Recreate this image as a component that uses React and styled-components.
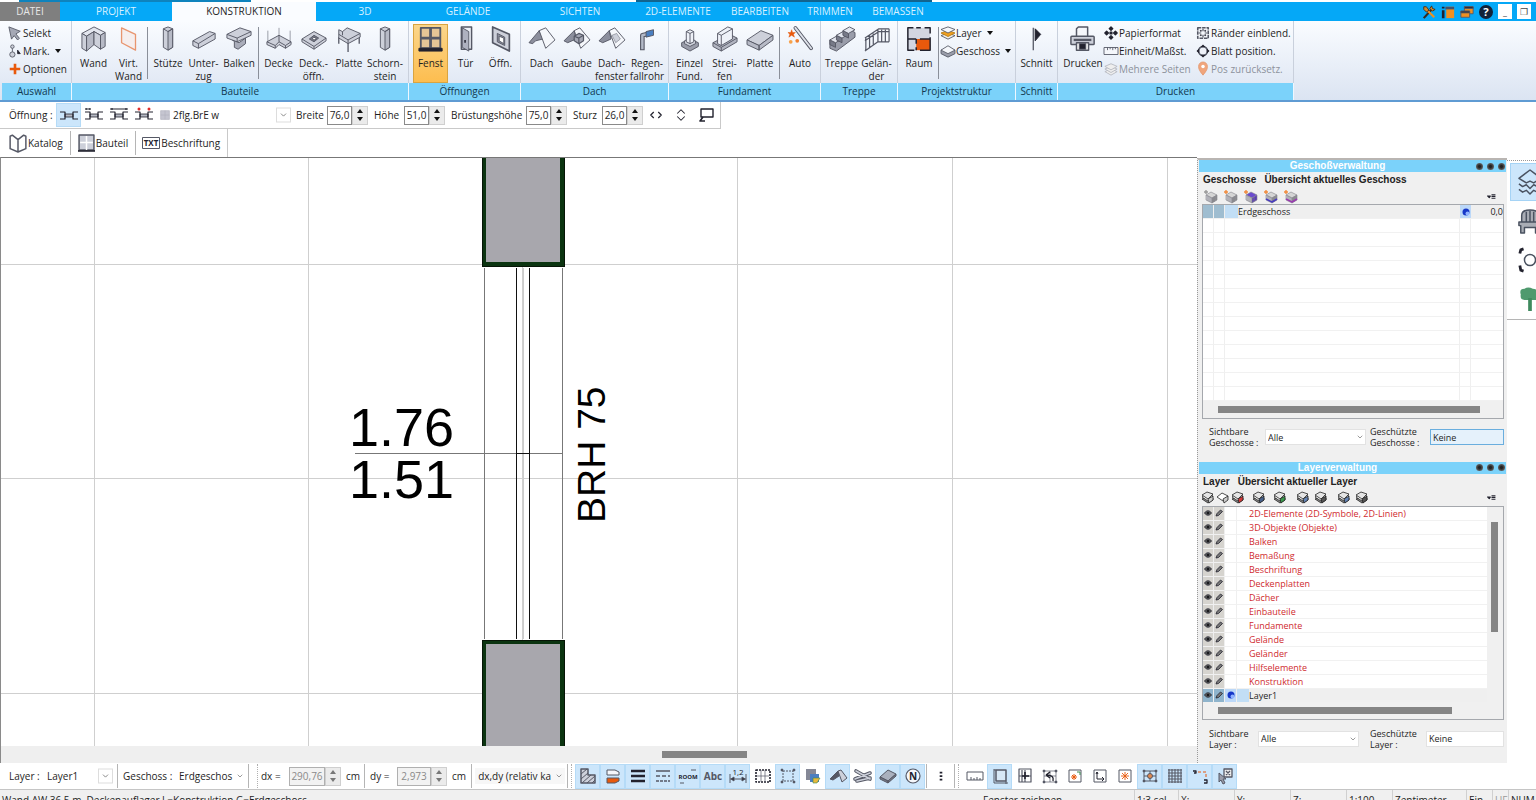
import React from "react"
import styled, { createGlobalStyle } from "styled-components"
import { ChevronDown } from "lucide-react"

const GlobalStyle = createGlobalStyle`
  * {
    box-sizing: border-box;
  }
  body {
    margin: 0;
    overflow: hidden;
    font: 10px/14px "Open Sans", "Noto Sans", sans-serif;
    color: #1e1e1e;
    background: #fff;
  }
  button, input, select {
    font: inherit;
    color: inherit;
    margin: 0;
    padding: 0;
    border: 0;
    border-radius: 0;
    background: none;
  }
`

const Page = styled.div`
  display: flex;
  flex-direction: column;
  height: 100vh;
  overflow: hidden;
`

/* ---------- icons ---------- */

const S = "#555865"
const F = "#cdd0da"
const D = "#22222e"
const O = "#e8590c"

const Svg = styled.svg`
  display: block;
  flex: none;
  overflow: visible;
  stroke-linejoin: round;
`

const column = (
  <>
    <path d="M9 3l5-2 5 2v20l-5 3-5-3z" />
    <path d="M14 6l5-3v20l-5 3z" fill="#b7bac6" />
    <path d="M9 3l5 3 5-3" fill="none" />
  </>
)

// 28 x 28 ribbon drawings
const big = {
  wand: (
    <>
      <path d="M1 8 14 1l12 6-5 3-7-4-8 5z" fill="#e3e6ee" />
      <path d="M1 8l5 3v16l-5-3z" />
      <path d="M6 11l8-5v14l-8 7z" fill="#b7bac6" />
      <path d="M14 6l7 4v15l-7-5z" />
      <path d="M21 10l5-3v15l-5 3z" fill="#b7bac6" />
    </>
  ),
  virt: <path d="M6 2l15 7v17L6 18z" fill="#f5eeee" stroke="#e8956f" strokeWidth="1.4" />,
  stuetze: column,
  schornstein: column,
  unterzug: (
    <>
      <path d="M2 16 20 6l6 2v6L8 24l-6-3z" />
      <path d="M2 16l6 3 18-11M8 19v5" fill="none" />
    </>
  ),
  balken: (
    <>
      <path d="M7 15l7 3 7-5v6l-8 6-4-2v-6z" fill="#aaadba" />
      <path d="M1 9 15 2l12 4v4L12 17 1 13z" />
      <path d="M1 9l11 4 15-7M12 13v4" fill="none" />
    </>
  ),
  decke: (
    <>
      <path d="M14 2v13M2 5v12M26 5v12" fill="none" strokeWidth="0.6" />
      <path d="M1 17l13-7 13 7v3l-6 4-7-4-4 4-9-4z" />
      <path d="M1 17l9 4 4-4 7 4 6-4M14 10v7M10 21v3M21 21v3" fill="none" />
    </>
  ),
  deckoeffn: (
    <>
      <path d="M1 14 14 6l13 7v3l-13 9L1 17z" />
      <path d="M1 14l13 8 13-9M14 22v3" fill="none" />
      <path d="M9 14l5-4 5 3-5 4z" fill="#777a88" />
      <path d="M12 14l2-2 3 2-3 1z" fill="#fff" />
    </>
  ),
  platte: (
    <>
      <path d="M3 12v7M25 10v9M13 18v10" fill="none" strokeWidth="1.4" />
      <path d="M3 4l4 2 5-4 14 6v4L13 19 3 13z" />
      <path d="M3 9l10 6 13-7M13 15v4M7 6v4" fill="none" />
    </>
  ),
  fenst: (
    <>
      <path d="M3 2h21v22H3z" fill="#e5c596" stroke={S} strokeWidth="2" />
      <path d="M13.500 2v22M3 13h21" stroke={S} strokeWidth="3" />
      <path d="M1 24h25v3H1z" fill={D} stroke={D} />
    </>
  ),
  tuer: (
    <>
      <path d="M9 1h11v24H9z" fill="#eef1f8" strokeWidth="1.6" />
      <path d="M10 2l7 4v21l-7-4z" fill="#aeb1bf" />
      <path d="M13 15v3" stroke={D} strokeWidth="1.6" />
    </>
  ),
  oeffn: (
    <>
      <path d="M5 1l18 8v18L5 18z" strokeWidth="1.8" />
      <path d="M10 8l8 4v9l-8-4z" fill="#8c8f9d" />
      <path d="M12 11l5 2v6l-5-3z" fill="#fff" />
    </>
  ),
  dach: (
    <>
      <path d="M11 5 0 18l4 1 3-3 8-2z" fill="#8c8f9d" />
      <path d="M11 5l7-3 10 13-10 9z" fill="#f5f7fb" />
    </>
  ),
  gaube: (
    <>
      <path d="M11 5 0 16l4 2 9-4z" fill="#8c8f9d" />
      <path d="M11 5l6-3 11 13-10 9z" fill="#f5f7fb" />
      <path d="M11 11l5-3 5 2v6l-5 3-5-3z" fill="#a5a8b5" strokeWidth="1.3" />
      <path d="M11 11l5 2 5-3M16 13v6" fill="none" strokeWidth="1.3" />
    </>
  ),
  dachfenster: (
    <>
      <path d="M11 5 0 16l4 2 9-4z" fill="#8c8f9d" />
      <path d="M11 5l6-3 11 13-10 9z" fill="#f5f7fb" />
      <path d="M14 10l5-2 4 6-5 4z" fill={F} strokeWidth="0.5" />
    </>
  ),
  regen: (
    <>
      <path d="M17 8l-8 2v16" fill="none" strokeWidth="5" />
      <path d="M17 8l-8 2v15" fill="none" stroke="#b4bac8" strokeWidth="2.6" />
      <path d="M13 6l8-2v6l-8 2z" fill="#4a7fc0" />
    </>
  ),
  einzel: (
    <>
      <path d="M5 18l9-4 9 4v4l-9 5-9-5z" fill="#9a9daa" />
      <path d="M8 16l6-3 6 3v3l-6 3-6-3z" />
      <path d="M10 6l4-2 4 2v11l-4 2-4-2z" fill="#eef1f8" />
      <path d="M10 6l4 2 4-2M14 8v11" fill="none" />
    </>
  ),
  streifen: (
    <>
      <path d="M1 18 19 9l8 4v4L10 27l-9-5z" fill="#b2b5c1" />
      <path d="M1 18l9 5 17-10M10 23v4" fill="none" />
      <path d="M6 8 17 1l5 2v11l-12 7-4-2z" fill="#eef1f8" />
      <path d="M6 8l4 2 12-7M10 10v11" fill="none" />
    </>
  ),
  slab: (
    <>
      <path d="M0 15 15 5l13 5-15 11z" />
      <path d="M0 15v5l13 6v-5zM13 21v5l15-11v-5z" fill="#b7bac6" />
    </>
  ),
  auto: (
    <>
      <path d="M9 2l17 22" stroke={S} strokeWidth="4" strokeLinecap="round" />
      <path d="M9 2l17 22" stroke="#dfe2ea" strokeWidth="2" strokeLinecap="round" />
      <path d="M5 4l1 3 3 0-2 2 1 3-3-2-3 2 1-3-2-2h3z" fill={O} stroke={O} strokeWidth="0.5" />
      <circle cx="4" cy="17" r="2" fill="#f7a24b" stroke="none" />
      <circle cx="11" cy="16" r="2" fill="#f08030" stroke="none" />
    </>
  ),
  treppe: (
    <>
      <path d="M1 15l6 3 5-3v-4l6-1 4-6 6 3v5L8 27l-7-3z" fill="#9a9daa" />
      {[0, 1, 2].map(i => (
        <g key={i} transform={`translate(${1 + i * 7} ${14 - i * 5})`}>
          <path d="M0 1v5l6 3V4z" fill="#777a88" />
          <path d="M0 1l7-4 6 3-7 4z" fill="#e3e6ee" />
        </g>
      ))}
    </>
  ),
  gelaender: (
    <path
      d="M1 13 16 3h11M1 16 16 6h11M1 27l14-10h12M2 13v13M6 10v13M10 8v13M15 4v13M19 4v13M23 4v13M27 3v14"
      fill="none"
      strokeWidth="1.3"
    />
  ),
  raum: (
    <>
      <path d="M2 2h24v24H2z" fill="#d3d6e0" stroke="none" />
      <path d="M11 14h15v12H11z" fill={O} stroke="none" />
      <path d="M8 2H2v24h7M26 8V2h-6M16 2h-5M26 12v14H15M2 14h9M15 14h11M11 14v5M11 23v3" fill="none" stroke={D} strokeWidth="1.6" />
    </>
  ),
  schnitt: (
    <>
      <path d="M10 2v24" stroke={S} strokeWidth="1.4" />
      <path d="M12 3l6 6-6 7z" fill={D} stroke={D} />
    </>
  ),
  drucken: (
    <>
      <path d="M7 11V3l2-2h10v10" fill="#f5f7fb" strokeWidth="1.6" />
      <rect x="1" y="11" width="25" height="9" rx="1" strokeWidth="1.6" />
      <path d="M4 15h19" strokeWidth="2.5" />
      <path d="M7 18h13v8H7z" fill="#fff" strokeWidth="1.6" />
      <path d="M10 19h7v6h-7z" fill={D} />
    </>
  ),
}

// 16 x 16 drawings
const small = {
  cursor: <path d="M1 1l13 5-5 3 4 5-2 2-4-5-3 4z" fill="#a5a8b5" />,
  mark: (
    <>
      <circle cx="5" cy="3" r="2" />
      <circle cx="5" cy="12" r="3" />
      <path d="M5 5v4" />
      <path d="M11 7l3 4h-3z" fill={D} stroke={D} />
    </>
  ),
  plus: <path d="M8 2v12M2 8h12" stroke={O} strokeWidth="3" />,
  layer: (
    <>
      <path d="M0 11l8-3 8 3-8 4z" fill="#eee" />
      <path d="M0 8l8-3 8 3-8 4z" fill="#f0a020" stroke="#b87a10" />
      <path d="M0 4l8-3 8 3-8 4z" fill="#f5f7fb" />
    </>
  ),
  geschoss: (
    <>
      <path d="M0 7v4l8 4 8-4V7z" fill="#9a9daa" />
      <path d="M0 7l8-5 8 5-8 4z" fill="#f5f7fb" />
    </>
  ),
  papier: (
    <path
      d="M8 1l2 2-2 2-2-2zM8 11l2 2-2 2-2-2zM3 6l2 2-2 2-2-2zM13 6l2 2-2 2-2-2zM7 7h2v2H7z"
      fill={D}
      stroke={D}
      strokeWidth="1.6"
    />
  ),
  lineal: <path d="M0 4h16v8H0zM4 4v3M7 4v2M10 4v3M13 4v2" fill="#f5f7fb" />,
  seiten: (
    <>
      <path d="M1 11l7-3 7 3-7 4z" fill="#eee" stroke="#b5b8c0" />
      <path d="M1 8l7-3 7 3-7 4z" fill="#eee" stroke="#b5b8c0" />
      <path d="M1 5l7-3 7 3-7 4z" fill="#eee" stroke="#b5b8c0" />
    </>
  ),
  raender: (
    <>
      <path d="M2 2h12v12H2z" fill="#f5f7fb" strokeWidth="1.8" strokeDasharray="4 1" />
      <path d="M8 3v3M8 10v3M3 8h3M10 8h3" strokeWidth="1.4" />
      <path d="M5 5h1v1H5zM10 5h1v1h-1zM5 10h1v1H5zM10 10h1v1h-1z" stroke={D} />
    </>
  ),
  blatt: (
    <>
      <circle cx="8" cy="8" r="5" fill="#eef1f8" strokeWidth="2" />
      <path d="M8 1l2 2H6zM8 15l2-2H6zM1 8l2-2v4zM15 8l-2-2v4z" fill={D} stroke={D} />
    </>
  ),
  pos: (
    <>
      <path d="M8 15C3 9 3 7 3 5a5 5 0 0 1 10 0c0 2 0 4-5 10z" fill="#f0a57c" stroke="#e39a72" />
      <circle cx="8" cy="5" r="2" fill="#fff" stroke="none" />
    </>
  ),
  tools: (
    <>
      <path d="M2 15 12 4" stroke="#3a2a1a" strokeWidth="2.5" />
      <path d="M14 14 6 6" stroke="#f09020" strokeWidth="2.5" />
      <path d="M2 2l3 0 3 4-3 2-3-3zM11 1l1 3 3 1-3 2-3-3z" fill="#d58a2a" stroke="#3a2a1a" />
    </>
  ),
  info: (
    <>
      <path d="M1 2h3v2H1zM1 6h3v9H1z" fill={D} stroke="none" />
      <path d="M6 2h9v13H6z" fill="#f09020" stroke="none" />
      <path d="M5 2h10v3H5z" fill="#44526b" stroke="none" />
    </>
  ),
  windows: (
    <>
      <path d="M5 2h10v8H5z" fill="#f09020" stroke={S} />
      <path d="M5 2h10v2H5z" fill={D} />
      <path d="M1 7h10v7H1z" fill="#f09020" stroke={S} />
      <path d="M1 7h10v2H1z" fill={D} />
    </>
  ),
  help: (
    <>
      <circle cx="8" cy="8" r="8" fill="#12223a" stroke="none" />
      <text x="8" y="13" textAnchor="middle" fontSize="13" fontWeight="700" fill="#fff" stroke="none">?</text>
    </>
  ),
  book: <path d="M8 5v11L1 13V2l2-1 5 4 5-4 2 1v11l-7 3" fill="#fff" strokeWidth="1.3" />,
  bauteil: (
    <>
      <path d="M1 0h14v14H1z" fill={F} strokeWidth="1.4" />
      <path d="M8 1v13M2 7h12" stroke="#fff" strokeWidth="1.4" />
      <path d="M0 15h16" stroke={D} strokeWidth="1.6" />
    </>
  ),
  fensterGrau: <path d="M1 1h14v14H1zM8 1v14M1 8h14" fill="#c5c5d0" stroke="#b0b0bd" />,
  breite: <path d="M5 4 1 8l4 4M11 4l4 4-4 4" fill="none" stroke={D} strokeWidth="1.6" />,
  hoehe: <path d="M3 6l5-5 5 5M3 10l5 5 5-5" fill="none" stroke={D} strokeWidth="1.4" />,
  monitor: (
    <>
      <path d="M3 2h12v8H3z" fill="#fff" stroke={D} strokeWidth="1.4" />
      <path d="M5 10l-3 4h5" fill="none" stroke={D} strokeWidth="1.6" />
    </>
  ),
  hatch: (
    <>
      <path d="M1 1h7v6h7v8H1z" strokeWidth="1.5" />
      <path d="M1 6l6-5M1 11l7-6M2 15l9-8M7 15l8-7M12 15l3-3" />
    </>
  ),
  halves: (
    <>
      <path d="M2 7V2h8l4 2v3z" fill="#f5f7fb" />
      <path d="M2 15v-5h12v3l-4 2z" fill={O} />
    </>
  ),
  thick: <path d="M1 3h14M1 8h14M1 13h14" stroke={D} strokeWidth="2.6" />,
  dashes: <path d="M1 3h14M1 8h4M7 8h4M13 8h2M1 13h3M5 13h3M9 13h3M13 13h2" strokeWidth="1.4" />,
  room: (
    <>
      <text x="8" y="11" textAnchor="middle" fontSize="6" fontWeight="700" fill={D} stroke="none">ROOM</text>
      <path d="M0 15h4M11 2h5" />
    </>
  ),
  abc: <text x="8" y="12" textAnchor="middle" fontSize="10" fontWeight="700" fill={S} stroke="none">Abc</text>,
  mass: (
    <>
      <text x="8" y="7" textAnchor="middle" fontSize="8" fill={D} stroke="none">1,2</text>
      <path d="M0 6v9M16 6v9M0 11h16" />
      <path d="M1 11l3-2v4zM15 11l-3-2v4z" fill={D} />
    </>
  ),
  grid: (
    <>
      <path d="M1 2h14v12H1z" fill="#fff" stroke={D} strokeWidth="1.6" strokeDasharray="2 1" />
      <path d="M6 2v12M10 2v12M2 8h12" strokeWidth="0.7" />
    </>
  ),
  frame: (
    <>
      <path d="M3 3h10v10H3z" fill="none" strokeDasharray="2 1" />
      <path d="M1 1h2v2H1zM13 1h2v2h-2zM1 13h2v2H1zM13 13h2v2h-2z" fill={S} strokeWidth="0.5" />
    </>
  ),
  stack: (
    <>
      <path d="M1 1h10v11H1z" fill="#858896" stroke="none" />
      <path d="M5 6h9v8H5z" fill="#4c7fc0" stroke="none" />
      <path d="M8 10h7l-3 5H8z" fill="#e9b83c" stroke="#3b8a50" strokeWidth="0.6" />
    </>
  ),
  roof: (
    <>
      <path d="M8 3 0 11l3 1 6-4z" fill={S} />
      <path d="M8 3l3-1 6 8-5 4z" />
    </>
  ),
  beams: (
    <>
      <path d="M1 3l14 8M0 11l15-6M2 13l13-3" stroke={S} strokeWidth="3.6" strokeLinecap="round" />
      <path d="M1 3l14 8M0 11l15-6M2 13l13-3" stroke={F} strokeWidth="1.6" strokeLinecap="round" />
    </>
  ),
  plate: (
    <>
      <path d="M0 9l8-7 8 4-8 7z" fill="#aab0be" />
      <path d="M0 9v2l8 4v-2zM8 13v2l8-7V6z" fill="#777a88" />
    </>
  ),
  north: (
    <>
      <circle cx="8" cy="8" r="7" fill="#f5f7fb" strokeWidth="1.2" />
      <text x="8" y="12" textAnchor="middle" fontSize="10" fontWeight="700" fill={D} stroke="none">N</text>
    </>
  ),
  dots: <path d="M8 3v2M8 7v2M8 11v2" stroke={D} strokeWidth="3" />,
  ruler: <path d="M0 4h16v8H0zM4 12V9M7 12v-2M10 12V9M13 12v-2" fill="#fff" />,
  sheet: (
    <>
      <path d="M4 2h10v11H4z" fill="#d8e8f6" strokeWidth="1.5" />
      <path d="M2 1v14h14M2 2h2M14 13v3" fill="none" />
    </>
  ),
  cross: (
    <>
      <path d="M2 1h12v13H2zM8 2v12M2 8h12M5 2v12" fill="#fff" strokeWidth="1.2" />
      <path d="M8 4v7M5 8h7" stroke={D} strokeWidth="1.6" />
    </>
  ),
  undo: (
    <>
      <path d="M2 3h12v11H2zM2 8h12M8 3v11" fill="none" strokeWidth="0.7" />
      <path d="M1 2h2v2H1zM13 2h2v2h-2zM1 13h2v2H1zM13 13h2v2h-2z" fill={S} strokeWidth="0.5" />
      <path d="M4 7l4-3M4 7l4 3M4 7c6 0 8 2 7 6" fill="none" stroke={D} strokeWidth="1.4" />
    </>
  ),
  sparkBox: (
    <>
      <path d="M2 2h12v12H2z" fill="#fff" />
      <path d="M7 6v6M4 9h6M5 7l4 4M9 7l-4 4" stroke={O} />
      <path d="M10 4h3v3" fill="none" stroke="#3b8a50" />
    </>
  ),
  axis: (
    <>
      <path d="M2 2h12v12H2z" fill="#fff" />
      <path d="M5 4v7h7M10 9l2 2-2 2M4 6l1-2 1 2" fill="none" stroke={D} />
    </>
  ),
  star: (
    <>
      <path d="M2 2h12v12H2z" fill="#fff" />
      <path d="M8 4v8M4 8h8M5 5l6 6M11 5l-6 6" stroke={O} strokeWidth="0.9" />
    </>
  ),
  snap: (
    <>
      <path d="M2 3h12v10H2zM2 8h12M8 3v10" fill="none" />
      <path d="M1 2h2v2H1zM13 2h2v2h-2zM1 12h2v2H1zM13 12h2v2h-2z" fill={S} strokeWidth="0.5" />
      <circle cx="8" cy="8" r="2.500" fill="#e08a50" />
    </>
  ),
  mesh: (
    <path
      d="M1 2h14M1 5h14M1 8h14M1 11h14M1 14h14M2 1v14M5 1v14M8 1v14M11 1v14M14 1v14"
      strokeWidth="1.1"
    />
  ),
  path: (
    <>
      <path d="M1 3h3v2H2" fill="none" stroke={D} strokeWidth="1.3" />
      <path d="M6 4h8v7" fill="none" stroke={O} strokeDasharray="3 2" />
      <path d="M12 12h3v3h-3" fill="none" stroke={D} strokeWidth="1.3" />
    </>
  ),
  cursorBox: (
    <>
      <path d="M7 1h8v8H7zM9 3l4 4M13 3l-4 4" fill="#eee" strokeWidth="1.3" />
      <path d="M2 5l7 6-3 0 2 4-2 1-2-4-2 2z" fill="#9a9daa" />
    </>
  ),
  eye: (
    <>
      <path d="M1 8c4-6 10-6 14 0-4 6-10 6-14 0z" fill="#6b6b66" stroke={D} strokeWidth="1.6" />
      <circle cx="8" cy="8" r="3" fill="#111" />
    </>
  ),
  pencil: <path d="M2 14l2-5 7-7 4 3-8 8z" fill="#777" stroke={D} strokeWidth="1.6" />,
  ball: (
    <>
      <circle cx="8" cy="8" r="7" fill="#1637c8" stroke="none" />
      <circle cx="11" cy="11" r="4" fill="#8fb2ff" stroke="none" />
    </>
  ),
  menu: <path d="M1 7h5l-2 3zM8 5h7M8 8h7M8 11h7" fill={D} stroke={D} strokeWidth="2" />,
}

const Big = ({ name }) => (
  <Svg width="26" height="26" viewBox="0 0 28 28" fill={F} stroke={S} aria-hidden="true">
    {big[name]}
  </Svg>
)

const Small = ({ name, size = 16 }) => (
  <Svg width={size} height={size} viewBox="0 0 16 16" fill={F} stroke={S} aria-hidden="true">
    {small[name]}
  </Svg>
)

// wall cut with an opening, drawn 18 x 12
const Opening = ({ children }) => (
  <Svg width="18" height="12" viewBox="0 0 18 12" fill="none" stroke={D} strokeWidth="1.2" aria-hidden="true">
    <path d="M5 5h8v3H5z" fill="#b5b8c2" strokeWidth="0.8" />
    <path d="M0 3h5v7H0M18 3h-5v7h5" />
    {children}
  </Svg>
)

/* ---------- tab bar ---------- */

const TopStrip = styled.div`
  flex: none;
  height: 2px;
  background: linear-gradient(
    90deg,
    #fff 19px,
    #0e83bd 19px 251px,
    #fff 251px 636px,
    #12648f 636px 932px,
    #fff 932px
  );
`

const TabBar = styled.nav`
  flex: none;
  display: flex;
  align-items: stretch;
  height: 19px;
  background: #05a8f7;
`

const tabColors = {
  file: "background: #7f7f7f; color: #e8e8e8;",
  active: "background: #fafcff; color: #1e1e1e;",
}

const Tab = styled.button`
  width: ${p => p.$w}px;
  line-height: 19px;
  color: #d9f1ff;
  white-space: nowrap;
  ${p => tabColors[p.$kind]}
`

const WindowTools = styled.div`
  display: flex;
  align-items: center;
  gap: 5px;
  margin-left: auto;
  padding-right: 5px;
`

const WindowButton = styled.button`
  width: 14px;
  height: 15px;
  background: #fff;
  color: #444;
  font-size: 9px;
  line-height: 15px;
`

/* ---------- ribbon ---------- */

const Ribbon = styled.div`
  flex: none;
  display: flex;
  padding-left: 2px;
  background: linear-gradient(#fafcff, #dbe4f2);
  border-bottom: 2px solid #5f9bd3;
`

const GroupBox = styled.section`
  flex: none;
  width: ${p => p.$w}px;
`

const GroupBody = styled.div`
  display: flex;
  height: 62px;
  padding: 3px 2px 0 ${p => p.$pad || 3}px;
  border-right: 1px solid #c9d0dc;
`

const GroupTitle = styled.h2`
  margin: 0;
  font-size: 10px;
  font-weight: 400;
  line-height: 17px;
  text-align: center;
  color: #12384f;
  background: #7bd2fa;
  border-right: 1px solid #eef7ff;
`

const BigButton = styled.button`
  display: flex;
  flex-direction: column;
  align-items: center;
  flex: none;
  width: ${p => p.$w || 35}px;
  height: 59px;
  padding-top: 2px;
  line-height: 13px;
  white-space: nowrap;
  ${p => p.$on && "background: linear-gradient(#fbd68c, #fdbd4e); box-shadow: inset 0 0 0 1px #d9a441;"}

  svg {
    margin-bottom: 5px;
  }
`

const Divider = styled.span`
  flex: none;
  width: 1px;
  height: 52px;
  margin: 3px 2px 0 1px;
  background: #8a8f99;
`

const SmallList = styled.div`
  display: flex;
  flex-direction: column;
  flex: none;
  width: ${p => p.$w || 60}px;
`

const SmallButton = styled.button`
  display: flex;
  align-items: center;
  gap: 1px;
  height: 18px;
  white-space: nowrap;
  color: ${p => (p.disabled ? "#8d929c" : "inherit")};
`

const Caret = styled.span`
  margin-left: 4px;
  border: 3px solid transparent;
  border-top: 4px solid #111;
  border-bottom: 0;
`

const Tool = ({ icon, lines, w, on }) => (
  <BigButton $w={w} $on={on}>
    <Big name={icon} />
    {lines.map(line => (
      <span key={line}>{line}</span>
    ))}
  </BigButton>
)

const Entry = ({ icon, text, caret, disabled }) => (
  <SmallButton disabled={disabled}>
    <Small name={icon} size={14} />
    {text}
    {caret && <Caret />}
  </SmallButton>
)

const Group = ({ title, w, pad, children }) => (
  <GroupBox $w={w}>
    <GroupBody $pad={pad}>{children}</GroupBody>
    <GroupTitle>{title}</GroupTitle>
  </GroupBox>
)

/* ---------- toolbars ---------- */

const Bar = styled.div`
  flex: none;
  display: flex;
  align-items: center;
  align-self: flex-start;
  height: ${p => p.$h || 27}px;
  padding: 0 ${p => p.$r || 2}px 0 9px;
  border: solid #c9c9c9;
  border-width: 0 1px ${p => (p.$open ? 0 : 1)}px 0;
  white-space: nowrap;
`

const IconButton = styled.button`
  display: grid;
  place-items: center;
  flex: none;
  width: 25px;
  height: ${p => p.$h || 24}px;
  ${p => p.$on && "background: #cce6fb; box-shadow: inset 0 0 0 1px #b5dbf7;"}
`

const TextButton = styled.button`
  display: flex;
  align-items: center;
  gap: 1px;
`

const Rule = styled.span`
  flex: none;
  width: 1px;
  height: 24px;
  margin: 0 ${p => p.$r || 5}px 0 ${p => p.$l || 5}px;
  background: #b5b5b5;
`

const Grip = styled.span`
  height: 24px;
  margin: 0 3px 0 2px;
  border-left: 1px dotted #b0b0b0;
`

const Field = styled.label`
  display: flex;
  align-items: center;
  margin-left: ${p => p.$l || 0}px;
`

const FieldName = styled.span`
  flex: none;
  width: ${p => p.$w}px;
`

const Unit = styled.span`
  margin-left: 5px;
`

const NumberBox = styled.input`
  width: ${p => p.$w || 25}px;
  height: 19px;
  text-align: center;
  border: 1px solid #8a8a8a;

  &:disabled {
    color: #8a8a8a;
    background: #f2f2f2;
    border-color: #b0b0b0;
  }
`

const Spinner = styled.span`
  display: grid;
  width: 16px;
  height: 19px;
  background: #ebebeb;
  border: 1px solid #cfcfcf;
`

const Arrow = styled.button`
  display: grid;
  place-items: center;

  &::after {
    content: "";
    border: 3px solid transparent;
    border-${p => (p.$up ? "bottom" : "top")}: 4px solid ${p => (p.disabled ? "#777" : "#111")};
    border-${p => (p.$up ? "top" : "bottom")}: 0;
  }
`

const NumberField = ({ label, labelWidth, value, w, l, disabled }) => (
  <>
    <Field $l={l}>
      <FieldName $w={labelWidth}>{label}</FieldName>
      <NumberBox $w={w} defaultValue={value} disabled={disabled} />
    </Field>
    <Spinner>
      <Arrow $up disabled={disabled} aria-label={`${label} erhöhen`} />
      <Arrow disabled={disabled} aria-label={`${label} verringern`} />
    </Spinner>
  </>
)

const PickBox = styled.span`
  position: relative;
  display: flex;
  flex: ${p => (p.$w ? "none" : "1")};
  width: ${p => (p.$w ? `${p.$w}px` : "auto")};
  min-width: 0;
  height: 16px;

  select {
    appearance: none;
    width: 100%;
    padding: 0 10px 0 2px;
    border: 1px solid ${p => p.$line || "transparent"};
    background: ${p => p.$bg || "#fff"};
    outline: 0;
  }
  svg {
    position: absolute;
    top: 50%;
    right: 0;
    width: ${p => (p.$boxed ? 15 : 12)}px;
    height: ${p => (p.$boxed ? 15 : 12)}px;
    padding: 2px;
    transform: translateY(-50%);
    color: #666;
    pointer-events: none;
    border: ${p => (p.$boxed ? "1px solid #ddd" : "0")};
  }
`

const Pick = ({ options, bare, ...rest }) => (
  <PickBox {...rest}>
    <select>
      {options.map(o => (
        <option key={o}>{o}</option>
      ))}
    </select>
    {!bare && <ChevronDown />}
  </PickBox>
)

/* ---------- workspace ---------- */

const Workspace = styled.main`
  flex: 1;
  display: flex;
  min-height: 0;
`

const Plan = styled.div`
  flex: 1;
  display: flex;
  flex-direction: column;
  min-width: 0;
  border-left: 1px solid #8a8a8a;
`

const Drawing = styled.svg`
  flex: 1;
  width: 100%;
  min-height: 0;
  border-top: 1px solid #777;
  font-family: "Liberation Sans", Arial, sans-serif;
`

const PlanScroll = styled.div`
  display: flex;
  align-items: center;
  height: 17px;
  padding-left: 55%;
  background: #efefef;
`

const PlanThumb = styled.div`
  width: 16%;
  height: 7px;
  margin-left: 3px;
  max-width: 85px;
  background: #858585;
`

const Sheet = () => (
  <Drawing shapeRendering="crispEdges">
    {[93, 307, 521, 736, 951, 1166].map(x => (
      <line key={x} x1={x + 0.5} x2={x + 0.5} y1="0" y2="100%" stroke="#cfcfcf" />
    ))}
    {[106, 320, 535].map(y => (
      <line key={y} x1="0" x2="100%" y1={y + 0.5} y2={y + 0.5} stroke="#cfcfcf" />
    ))}
    <g stroke="#777">
      <path d="M483.500 110v371M561.500 110v371" />
      <path d="M515.500 110v371M528.500 110v371" stroke="#111" />
      <path d="M522.500 110v371" stroke="#ccc" />
      <path d="M354 295.500h208" />
      <path d="M515 295.500h14" stroke="#111" />
    </g>
    <g fill="#a8a7ad" stroke="#0b3410" strokeWidth="4">
      <rect x="483" y="-10" width="78" height="116" />
      <rect x="483" y="484" width="78" height="600" />
    </g>
    <g fill="none" stroke="#061506">
      <rect x="481" y="-10" width="82" height="118" />
      <rect x="481" y="482" width="82" height="600" />
    </g>
    <g fontSize="54" shapeRendering="auto">
      <text x="348" y="288">1.76</text>
      <text x="348" y="340">1.51</text>
    </g>
    <text fontSize="39" transform="translate(604 365) rotate(-90)">BRH 75</text>
  </Drawing>
)

/* ---------- side panels ---------- */

const Side = styled.aside`
  flex: none;
  display: flex;
  flex-direction: column;
  width: 310px;
  padding: 0 1px;
  margin-top: 1px;
  background: #f0f0f0;
  border-top: 2px solid #b9b5b2;
  border-left: 1px dotted #999;
  font-size: 9px;
  line-height: 11px;
`

const Panel = styled.section`
  flex: 1;
  display: flex;
  flex-direction: column;
  min-height: 0;
`

const PanelTitle = styled.header`
  display: grid;
  grid-template-columns: 1fr 30px;
  height: 12px;
  background: #7bd2fa;

  h2 {
    margin: 0;
    font: 700 10px/12px "Liberation Sans", Arial, sans-serif;
    text-align: center;
    color: #fff;
  }
`

const Knobs = styled.div`
  display: flex;
  align-items: center;
  gap: 4px;
`

const Knob = styled.button`
  width: 7px;
  height: 7px;
  border-radius: 50%;
  background: radial-gradient(#222 20%, #8a8a8a);
`

const PanelTabs = styled.div`
  display: flex;
  gap: 8px;
  height: 16px;
  padding: 0 4px;

  button {
    font: 700 10px/16px "Liberation Sans", Arial, sans-serif;
    color: #222;
  }
`

const PanelTools = styled.div`
  display: flex;
  align-items: center;
  gap: ${p => p.$gap}px;
  height: 16px;
  padding: 0 8px 0 ${p => p.$pad}px;

  button:last-child {
    margin-left: auto;
  }
`

const ListBox = styled.div`
  flex: 1;
  display: flex;
  flex-direction: column;
  min-height: 0;
  margin: 0 2px 0 3px;
  border: 1px solid #a5a8ad;
`

const ListArea = styled.div`
  flex: 1;
  display: flex;
  min-height: 0;
  overflow: hidden;
  background: #fff;
`

const Table = styled.table`
  flex: 1;
  align-self: flex-start;
  table-layout: fixed;
  width: 100%;
  border-spacing: 0;

  td {
    height: 14px;
    padding: 0;
    line-height: 13px;
    white-space: nowrap;
    overflow: hidden;
    border-bottom: 1px solid #f1f1f1;
    color: ${p => p.$ink};
  }
`

const Cell = styled.td`
  border-right: ${p => (p.$line ? "1px solid #efefef" : 0)};
  background: ${p => p.$bg || "transparent"};

  svg {
    margin: 0 auto;
  }
`

const Row = styled.tr`
  background: ${p => (p.$on ? "#efefef" : "#fff")};

  && td {
    ${p => p.$on && "color: #1e1e1e;"}
  }
`

const VScroll = styled.div`
  flex: none;
  width: 16px;
  padding: 15px 5px 0 4px;
  background: #f0f0f0;

  &::after {
    content: "";
    display: block;
    height: 110px;
    background: #858585;
  }
`

const HScroll = styled.div`
  flex: none;
  height: 17px;
  padding: 5px ${p => p.$r}px 0 15px;

  &::after {
    content: "";
    display: block;
    height: 7px;
    background: #858585;
  }
`

const Filters = styled.footer`
  display: flex;
  height: 43px;
  padding: 0 2px 6px 10px;
`

const Filter = styled.label`
  display: flex;
  align-items: center;
  flex: ${p => (p.$grow ? "1" : "none")};
  margin-right: ${p => p.$r || 0}px;
  white-space: pre-line;
`

const storeyCols = [11, 11, 13, null, 11, 32]
const layerCols = [11, 11, 12, 12, null]

const Cols = ({ widths }) => (
  <colgroup>
    {widths.map((w, i) => (
      <col key={i} width={w || undefined} />
    ))}
  </colgroup>
)

const layers = [
  "2D-Elemente (2D-Symbole, 2D-Linien)",
  "3D-Objekte (Objekte)",
  "Balken",
  "Bemaßung",
  "Beschriftung",
  "Deckenplatten",
  "Dächer",
  "Einbauteile",
  "Fundamente",
  "Gelände",
  "Geländer",
  "Hilfselemente",
  "Konstruktion",
  "Layer1",
]

const Cube = ({ top = "#d5d5d5", side = "#8d8d92", mark, low }) => (
  <Svg width="13" height="13" viewBox="0 0 13 13" stroke="#85858c" strokeWidth="0.6" aria-hidden="true">
    <path d="M2 5l5-3 6 3-5 3z" fill={top} />
    <path d="M2 5v5l6 3V8z" fill="#c5c5cc" />
    <path d="M8 8v5l5-3V5z" fill={side} />
    <path d="M4 6v5M6 7v5M10 7v5" fill="none" />
    {low && <path d="M2 9l6 3 5-3" fill="none" stroke={low} strokeWidth="1.5" />}
    <path d="M0 2h4M2 0v4" stroke={mark || "#999"} strokeWidth="1.4" />
  </Svg>
)

const LayerCube = ({ accent = "#555", lines = 2 }) => (
  <Svg width="13" height="13" viewBox="0 0 13 13" stroke="#222" strokeWidth="0.8" aria-hidden="true">
    {lines > 1 && <path d="M1 8l6 4 5-3V7L6 6z" fill="#888" />}
    <path d="M1 6l5-4 6 3-5 5z" fill="#fff" />
    {lines > 1 && <path d="M1 4l5-3 6 2-5 5z" fill="#e5e5e5" />}
    <path d="M7 8l5-3v4l-4 3z" fill={accent} />
  </Svg>
)

const ToolButton = styled.button`
  display: grid;
  place-items: center;
  width: 13px;
  height: 14px;
  margin-right: ${p => p.$r || 0}px;
`

const PanelHead = ({ title }) => (
  <PanelTitle>
    <h2>{title}</h2>
    <Knobs>
      <Knob aria-label="Anheften" />
      <Knob aria-label="Maximieren" />
      <Knob aria-label="Schließen" />
    </Knobs>
  </PanelTitle>
)

const Storeys = () => (
  <Panel>
    <PanelHead title="Geschoßverwaltung" />
    <PanelTabs>
      <button>Geschosse</button>
      <button>Übersicht aktuelles Geschoss</button>
    </PanelTabs>
    <PanelTools $gap={7} $pad={5}>
      <ToolButton aria-label="Geschoss"><Cube /></ToolButton>
      <ToolButton aria-label="Neues Geschoss"><Cube mark="#f08a3c" /></ToolButton>
      <ToolButton aria-label="Dachgeschoss"><Cube mark="#f08a3c" top="#6a4ad0" side="#5a3cb5" /></ToolButton>
      <ToolButton aria-label="Zwischengeschoss"><Cube mark="#f08a3c" low="#4a3cc0" /></ToolButton>
      <ToolButton aria-label="Kellergeschoss"><Cube mark="#f08a3c" low="#9a3cb0" /></ToolButton>
      <ToolButton aria-label="Menü"><Small name="menu" size={9} /></ToolButton>
    </PanelTools>
    <ListBox>
      <ListArea>
        <Table $ink="#1e1e1e">
          <Cols widths={storeyCols} />
          <tbody>
            <Row $on>
              <Cell $bg="#9fbdd0" $line />
              <Cell $bg="#9fbdd0" $line />
              <Cell $bg="#c2def5" />
              <Cell $line>Erdgeschoss</Cell>
              <Cell $bg="#bcd8f8"><Small name="ball" size={8} /></Cell>
              <Cell align="right">0,0</Cell>
            </Row>
            {Array.from({ length: 13 }, (_, i) => (
              <Row key={i}>
                <Cell $line />
                <Cell $line />
                <Cell />
                <Cell $line />
                <Cell $line />
                <Cell />
              </Row>
            ))}
          </tbody>
        </Table>
      </ListArea>
      <HScroll $r={23} />
    </ListBox>
    <Filters>
      <Filter $r={4}>
        <FieldName $w={56}>{"Sichtbare\nGeschosse :"}</FieldName>
        <Pick $w={101} $line="#e2e2e2" options={["Alle", "Keine"]} />
      </Filter>
      <Filter $grow>
        <FieldName $w={60}>{"Geschützte\nGeschosse :"}</FieldName>
        <Pick $line="#6aaede" $bg="#e5f1fb" bare options={["Keine", "Alle"]} />
      </Filter>
    </Filters>
  </Panel>
)

const Layers = () => (
  <Panel>
    <PanelHead title="Layerverwaltung" />
    <PanelTabs>
      <button>Layer</button>
      <button>Übersicht aktueller Layer</button>
    </PanelTabs>
    <PanelTools $gap={2} $pad={2}>
      <ToolButton aria-label="Sichtbar"><LayerCube accent="#ccc" /></ToolButton>
      <ToolButton aria-label="Neu"><LayerCube accent="#ccc" lines={1} /></ToolButton>
      <ToolButton $r={6} aria-label="Löschen"><LayerCube accent="#d23a3a" /></ToolButton>
      <ToolButton $r={6} aria-label="Bearbeiten"><LayerCube accent="#49628c" /></ToolButton>
      <ToolButton $r={8} aria-label="Aktivieren"><LayerCube accent="#3b9a4c" /></ToolButton>
      <ToolButton $r={3} aria-label="Kopieren"><LayerCube accent="#6484b5" /></ToolButton>
      <ToolButton $r={8} aria-label="Einfügen"><LayerCube /></ToolButton>
      <ToolButton $r={3} aria-label="Import"><LayerCube accent="#6484b5" /></ToolButton>
      <ToolButton aria-label="Export"><LayerCube /></ToolButton>
      <ToolButton aria-label="Menü"><Small name="menu" size={9} /></ToolButton>
    </PanelTools>
    <ListBox>
      <ListArea>
        <Table $ink="#cf2a2e">
          <Cols widths={layerCols} />
          <tbody>
            {layers.map(name => {
              const on = name === "Layer1"
              const bg = on ? "#8fb4cc" : "#d6d4cf"
              return (
                <Row key={name} $on={on}>
                  <Cell $bg={bg} $line><Small name="eye" size={8} /></Cell>
                  <Cell $bg={bg} $line><Small name="pencil" size={8} /></Cell>
                  <Cell $bg={on ? "#bcd8f8" : undefined} $line>{on && <Small name="ball" size={8} />}</Cell>
                  <Cell $bg={on ? "#c2def5" : undefined} />
                  <Cell>{name}</Cell>
                </Row>
              )
            })}
          </tbody>
        </Table>
        <VScroll />
      </ListArea>
      <HScroll $r={51} />
    </ListBox>
    <Filters>
      <Filter $r={11}>
        <FieldName $w={49}>{"Sichtbare\nLayer :"}</FieldName>
        <Pick $w={101} $line="#e2e2e2" options={["Alle", "Keine"]} />
      </Filter>
      <Filter $grow>
        <FieldName $w={56}>{"Geschützte\nLayer :"}</FieldName>
        <Pick $line="#e2e2e2" bare options={["Keine", "Alle"]} />
      </Filter>
    </Filters>
  </Panel>
)

const Rail = styled.nav`
  flex: none;
  align-self: flex-start;
  width: 29px;
  margin-top: 3px;
  padding: 2px 0 0 3px;
  overflow: hidden;
  border-top: 1px dotted #999;
  border-bottom: 1px solid #b5b5b5;
`

const RailButton = styled.button`
  display: flex;
  align-items: center;
  width: 38px;
  height: 38px;
  margin-bottom: 1px;
  padding-left: 8px;
  ${p => p.$on && "background: #cce6fb; box-shadow: inset 0 0 0 1px #a5d3f5;"}
`

const RailSvg = props => (
  <Svg width="24" height="26" viewBox="0 0 26 28" fill="none" stroke="#4a5260" strokeWidth="1.6" aria-hidden="true" {...props} />
)

const SideRail = () => (
  <Rail>
    <RailButton $on aria-label="Layer">
      <RailSvg>
        <path d="M1 10 13 1l12 9-8 5-4-2-4 2z" />
        <path d="M1 16l4 3 4-2 4 4 4-4 4 2M1 22l4 3 4-2 4 4 4-4 4 2" />
      </RailSvg>
    </RailButton>
    <RailButton aria-label="Möbel">
      <RailSvg fill="#a9adb5">
        <path d="M4 16V8q0-6 9-6t9 6v8z" />
        <path d="M9 4v12M13 3v12M17 4v12" />
        <path d="M1 15h24v4h-2v8h-4v-6H7v6H3v-8H1z" />
      </RailSvg>
    </RailButton>
    <RailButton aria-label="Fokus">
      <RailSvg>
        <circle cx="13" cy="14" r="6" />
        <path d="M6 2 3 3l-1 4M20 2l3 1 1 4M6 26l-3-1-1-5M20 26l3-1 1-5" stroke={D} strokeWidth="3" />
      </RailSvg>
    </RailButton>
    <RailButton aria-label="Pflanzen">
      <RailSvg stroke="none" fill="#4f9a6e">
        <path d="M3 9Q1 3 7 3q4-3 9 0 8 1 8 7 0 6-8 5H7Q2 15 3 9z" />
        <path d="M11 13h4v14h-4z" fill="#3f8a5e" />
      </RailSvg>
    </RailButton>
  </Rail>
)

/* ---------- bottom ---------- */

const BottomBar = styled.div`
  flex: none;
  display: flex;
  align-items: center;
  height: 27px;
  padding-left: 9px;
  overflow: hidden;
  white-space: nowrap;
  background: #fff;
  border-bottom: 1px solid #c5c5c5;
`

const StatusBar = styled.footer`
  flex: none;
  display: flex;
  height: 10px;
  overflow: hidden;
  line-height: 20px;
  background: #f0f0f0;
  white-space: nowrap;
`

const Status = styled.span`
  flex: ${p => (p.$w ? "none" : "1")};
  width: ${p => (p.$w ? `${p.$w}px` : "auto")};
  height: 20px;
  padding-left: 2px;
  border-left: ${p => (p.$line ? "1px solid #d0d0d0" : 0)};
  color: ${p => (p.$dim ? "#999" : "inherit")};
`

const viewTools = [
  ["hatch", 1],
  ["halves", 1],
  ["thick", 1],
  ["dashes", 1],
  ["room", 1],
  ["abc", 1],
  ["mass", 1],
  ["grid", 0],
  ["frame", 1],
  ["stack", 0],
  ["roof", 1],
  ["beams", 0],
  ["plate", 1],
  ["north", 1],
]

const snapTools = [
  ["ruler", 0],
  ["sheet", 1],
  ["cross", 0],
  ["undo", 0],
  ["sparkBox", 0],
  ["axis", 0],
  ["star", 0],
  ["snap", 1],
  ["mesh", 1],
  ["path", 1],
  ["cursorBox", 1],
]

const ToolStrip = ({ tools }) =>
  tools.map(([name, on]) => (
    <IconButton key={name} $on={on} $h={25} aria-label={name} aria-pressed={!!on}>
      <Small name={name} />
    </IconButton>
  ))

const tabs = [
  ["DATEI", 60, "file"],
  ["PROJEKT", 112],
  ["KONSTRUKTION", 144, "active"],
  ["3D", 98],
  ["GELÄNDE", 108],
  ["SICHTEN", 116],
  ["2D-ELEMENTE", 80],
  ["BEARBEITEN", 84],
  ["TRIMMEN", 56],
  ["BEMASSEN", 80],
]

export default function App() {
  return (
    <Page>
      <GlobalStyle />
      <TopStrip />
      <TabBar>
        {tabs.map(([name, w, kind]) => (
          <Tab key={name} $w={w} $kind={kind}>{name}</Tab>
        ))}
        <WindowTools>
          <Small name="tools" size={14} />
          <Small name="info" size={14} />
          <Small name="windows" size={14} />
          <Small name="help" size={14} />
          <WindowButton>_</WindowButton>
          <WindowButton>❐</WindowButton>
        </WindowTools>
      </TabBar>

      <Ribbon>
        <Group title="Auswahl" w={70} pad={6}>
          <SmallList>
            <Entry icon="cursor" text="Selekt" />
            <Entry icon="mark" text="Mark." caret />
            <Entry icon="plus" text="Optionen" />
          </SmallList>
        </Group>
        <Group title="Bauteile" w={337} pad={4}>
          <Tool icon="wand" lines={["Wand"]} />
          <Tool icon="virt" lines={["Virt.", "Wand"]} />
          <Divider />
          <Tool icon="stuetze" lines={["Stütze"]} w={36} />
          <Tool icon="unterzug" lines={["Unter-", "zug"]} />
          <Tool icon="balken" lines={["Balken"]} w={36} />
          <Divider />
          <Tool icon="decke" lines={["Decke"]} />
          <Tool icon="deckoeffn" lines={["Deck.-", "öffn."]} />
          <Tool icon="platte" lines={["Platte"]} w={36} />
          <Tool icon="schornstein" lines={["Schorn-", "stein"]} w={36} />
        </Group>
        <Group title="Öffnungen" w={112} pad={4}>
          <Tool icon="fenst" lines={["Fenst"]} on />
          <Tool icon="tuer" lines={["Tür"]} />
          <Tool icon="oeffn" lines={["Öffn."]} />
        </Group>
        <Group title="Dach" w={148}>
          <Tool icon="dach" lines={["Dach"]} />
          <Tool icon="gaube" lines={["Gaube"]} />
          <Tool icon="dachfenster" lines={["Dach-", "fenster"]} />
          <Tool icon="regen" lines={["Regen-", "fallrohr"]} w={36} />
        </Group>
        <Group title="Fundament" w={152}>
          <Tool icon="einzel" lines={["Einzel", "Fund."]} />
          <Tool icon="streifen" lines={["Strei-", "fen"]} />
          <Tool icon="slab" lines={["Platte"]} w={36} />
          <Divider />
          <Tool icon="auto" lines={["Auto"]} w={36} />
        </Group>
        <Group title="Treppe" w={77}>
          <Tool icon="treppe" lines={["Treppe"]} />
          <Tool icon="gelaender" lines={["Gelän-", "der"]} />
        </Group>
        <Group title="Projektstruktur" w={118}>
          <Tool icon="raum" lines={["Raum"]} w={36} />
          <Divider />
          <SmallList $w={72}>
            <Entry icon="layer" text="Layer" caret />
            <Entry icon="geschoss" text="Geschoss" caret />
          </SmallList>
        </Group>
        <Group title="Schnitt" w={42}>
          <Tool icon="schnitt" lines={["Schnitt"]} />
        </Group>
        <Group title="Drucken" w={236} pad={4}>
          <Tool icon="drucken" lines={["Drucken"]} w={42} />
          <SmallList $w={92}>
            <Entry icon="papier" text="Papierformat" />
            <Entry icon="lineal" text="Einheit/Maßst." />
            <Entry icon="seiten" text="Mehrere Seiten" disabled />
          </SmallList>
          <SmallList $w={92}>
            <Entry icon="raender" text="Ränder einblend." />
            <Entry icon="blatt" text="Blatt position." />
            <Entry icon="pos" text="Pos zurücksetz." disabled />
          </SmallList>
        </Group>
      </Ribbon>

      <Bar>
        <FieldName $w={47}>Öffnung :</FieldName>
        <IconButton $on aria-label="Öffnung Standard"><Opening /></IconButton>
        <IconButton aria-label="Öffnung links">
          <Opening><path d="M1 0h4M1 -1v2M5 -1v2" /></Opening>
        </IconButton>
        <IconButton aria-label="Öffnung beidseitig">
          <Opening><path d="M0 0h18M2 -1v2M16 -1v2" /></Opening>
        </IconButton>
        <IconButton aria-label="Öffnung Punkte">
          <Opening>
            <circle cx="4" cy="0" r="1.500" fill="#e02b2b" stroke="none" />
            <circle cx="14" cy="0" r="1.500" fill="#e02b2b" stroke="none" />
          </Opening>
        </IconButton>
        <Field $l={4}>
          <Small name="fensterGrau" size={10} />
          <Pick $w={121} $boxed options={["2flg.BrE w"]} />
        </Field>
        <NumberField label="Breite" labelWidth={31} value="76,0" l={5} />
        <NumberField label="Höhe" labelWidth={30} value="51,0" l={6} />
        <NumberField label="Brüstungshöhe" labelWidth={75} value="75,0" l={6} />
        <NumberField label="Sturz" labelWidth={29} value="26,0" l={6} />
        <IconButton aria-label="Breite spiegeln"><Small name="breite" size={12} /></IconButton>
        <IconButton aria-label="Höhe spiegeln"><Small name="hoehe" size={12} /></IconButton>
        <IconButton aria-label="Darstellung"><Small name="monitor" /></IconButton>
      </Bar>
      <Bar $h={28} $r={7} $open>
        <TextButton><Small name="book" size={18} />Katalog</TextButton>
        <Rule $l={7} $r={7} />
        <TextButton><Small name="bauteil" size={17} />Bauteil</TextButton>
        <Rule $l={7} $r={6} />
        <TextButton>
          <Svg width="18" height="14" viewBox="0 0 18 14" aria-hidden="true">
            <rect x="0.500" y="1.500" width="17" height="11" fill="#fff" stroke={S} />
            <text x="9" y="10" textAnchor="middle" fontSize="8" fontWeight="700" fill={D}>TXT</text>
          </Svg>
          Beschriftung
        </TextButton>
      </Bar>

      <Workspace>
        <Plan>
          <Sheet />
          <PlanScroll>
            <PlanThumb />
          </PlanScroll>
        </Plan>
        <Side>
          <Storeys />
          <Layers />
        </Side>
        <SideRail />
      </Workspace>

      <BottomBar>
        <Field>
          <FieldName $w={35}>Layer :</FieldName>
          <Pick $w={69} $boxed options={["Layer1"]} />
        </Field>
        <Rule $l={4} />
        <Field>
          <FieldName $w={53}>Geschoss :</FieldName>
          <Pick $w={70} options={["Erdgeschos"]} />
        </Field>
        <Rule $l={2} $r={6} />
        <Grip />
        <NumberField label="dx =" labelWidth={28} value="290,76" w={36} disabled />
        <Unit>cm</Unit>
        <Rule $l={4} />
        <NumberField label="dy =" labelWidth={27} value="2,973" w={34} disabled />
        <Unit>cm</Unit>
        <Rule $l={5} $r={3} />
        <Pick $w={90} $bg="#f7f7f7" options={["dx,dy (relativ ka"]} />
        <Rule $l={2} $r={1} />
        <Grip />
        <ToolStrip tools={viewTools} />
        <Rule $l={1} $r={1} />
        <IconButton aria-label="Weitere"><Small name="dots" size={14} /></IconButton>
        <Rule $l={1} $r={1} />
        <Grip />
        <ToolStrip tools={snapTools} />
      </BottomBar>
      <StatusBar>
        <Status>Wand AW 36,5 m, Deckenauflager L=Konstruktion G=Erdgeschoss</Status>
        <Status $w={153}>Fenster zeichnen</Status>
        <Status $w={44} $line>1:3 sel</Status>
        <Status $w={56} $line>X:</Status>
        <Status $w={56} $line>Y:</Status>
        <Status $w={56} $line>Z:</Status>
        <Status $w={46} $line>1:100</Status>
        <Status $w={74} $line>Zentimeter</Status>
        <Status $w={26} $line>Ein</Status>
        <Status $w={16} $line $dim>UF</Status>
        <Status $w={28} $line>NUM</Status>
      </StatusBar>
    </Page>
  )
}
